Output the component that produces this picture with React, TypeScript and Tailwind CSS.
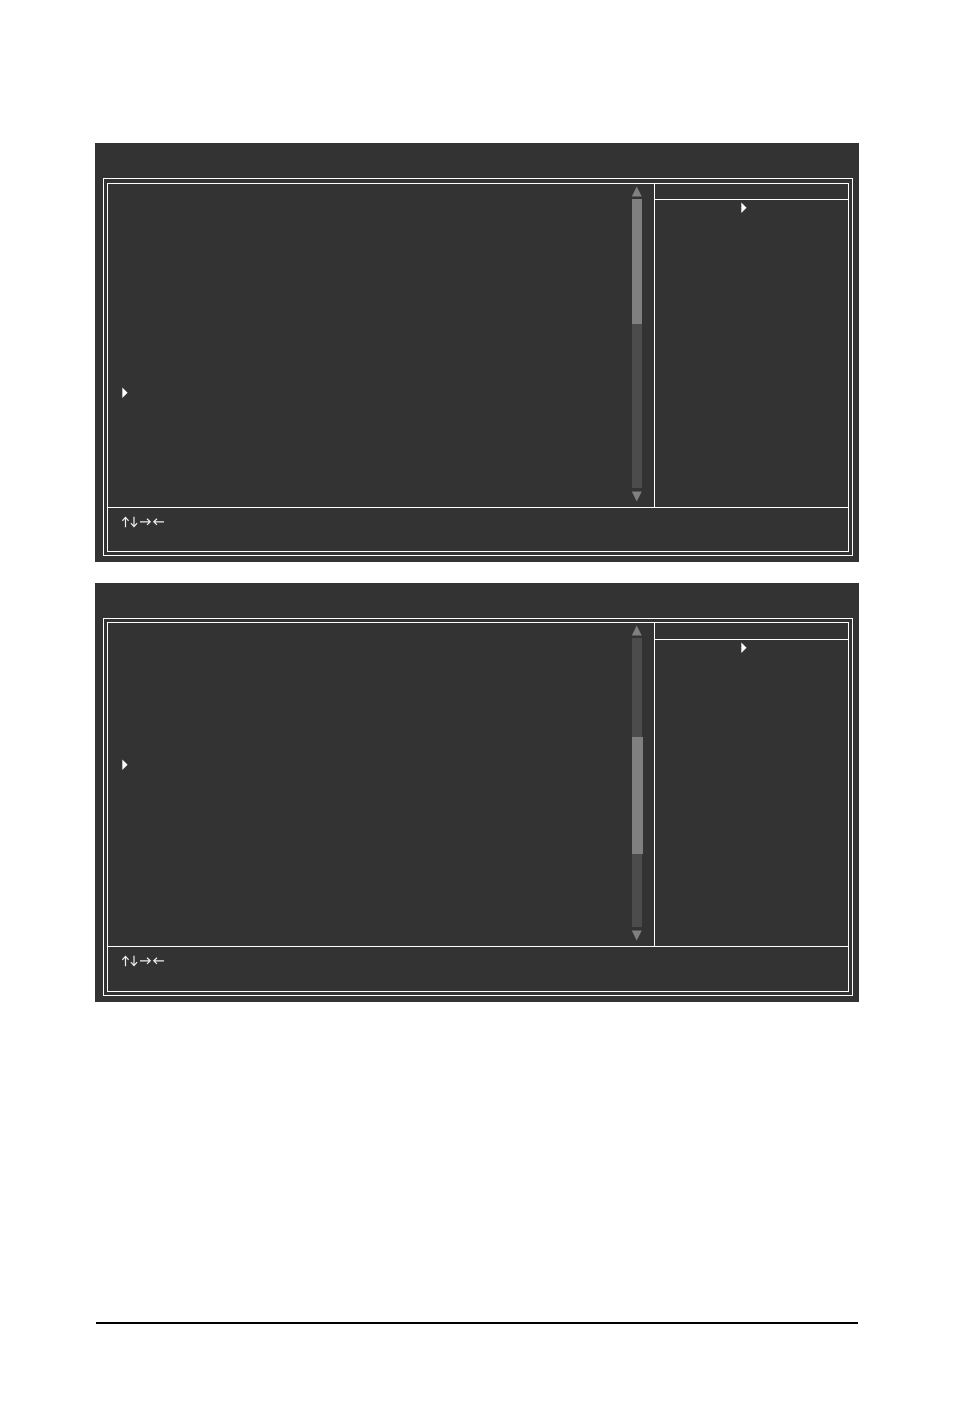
interface ScreenProps {
  frameClass: string
  helpHeadClass: string
  pointerClass: string
  thumbClass: string
  thumbTop: number
  thumbHeight: number
}

function Pointer() {
  return (
    <svg className="block h-[11px] w-[6px]" viewBox="0 0 6 11" fill="#fff">
      <path d="M.3 .4L5.6 5.7L.3 11Z" />
    </svg>
  )
}

function ArrowKeys() {
  return (
    <svg
      className="block h-[12px] w-[43px]"
      viewBox="0 0 43 12"
      fill="none"
      stroke="#eee"
      strokeWidth="1.2"
    >
      {/* up */}
      <path d="M3.5 11.2V1.4M.4 4.8L3.5 1.4L6.6 4.8" />
      {/* down */}
      <path d="M12 .8V10.4M8.9 7.2L12 10.6L15.1 7.2" />
      {/* right */}
      <path d="M18 5.8H28M25 2.7L28.2 5.8L25 8.9" />
      {/* left */}
      <path d="M42 5.8H32M35 2.7L31.8 5.8L35 8.9" />
    </svg>
  )
}

function ScrollBar({ thumbClass, thumbTop, thumbHeight }: Pick<ScreenProps, 'thumbClass' | 'thumbTop' | 'thumbHeight'>) {
  return (
    <div className="mr-3 flex w-[10px] flex-col pt-[2px] pb-[5px]">
      <button type="button" aria-label="Scroll up" className="block">
        <svg className="block h-[11px] w-[10px]" viewBox="0 0 10 11" fill="#808080">
          <path d="M4.7 .6L9.8 10.4H-.2Z" />
        </svg>
      </button>
      <div className="mt-[2px] mb-[3px] flex-1 bg-[#4c4c4c]">
        <div
          className={`relative bg-[#808080] ${thumbClass}`}
          style={{ top: thumbTop, height: thumbHeight }}
        />
      </div>
      <button type="button" aria-label="Scroll down" className="block">
        <svg className="block h-[11px] w-[10px]" viewBox="0 0 10 11" fill="#808080">
          <path d="M-.2 .5H9.8L4.7 10.4Z" />
        </svg>
      </button>
    </div>
  )
}

function SetupScreen({ frameClass, helpHeadClass, pointerClass, ...bar }: ScreenProps) {
  return (
    <section className="bg-[#333] pt-[35px] pr-[6px] pb-[6px] pl-2">
      {/* double frame */}
      <div className={`flex min-h-[378px] flex-col border border-white px-[3px] pb-[3px] ${frameClass}`}>
        <div className="flex flex-1 flex-col border border-white">
          <div className="flex h-[323px]">
            <div className={`flex-1 pl-[14px] ${pointerClass}`}>
              <Pointer />
            </div>
            <ScrollBar {...bar} />
            <aside className="w-[194px] border-l border-white">
              <div className={`border-b border-white ${helpHeadClass}`} />
              <div className="pt-[2px] pl-[86px]">
                <Pointer />
              </div>
            </aside>
          </div>
          <div className="flex-1 border-t border-white pt-2 pl-[14px]">
            <ArrowKeys />
          </div>
        </div>
      </div>
    </section>
  )
}

export default function App() {
  return (
    <div className="flex min-h-screen flex-col bg-white px-[95px] pt-[143px] pb-[94px]">
      <main className="flex flex-col gap-[21px]">
        <SetupScreen
          frameClass="pt-[4px]"
          helpHeadClass="h-[16px]"
          pointerClass="pt-[203px]"
          thumbClass="w-[10px]"
          thumbTop={0}
          thumbHeight={125}
        />
        <SetupScreen
          frameClass="pt-[3px]"
          helpHeadClass="h-[17px]"
          pointerClass="pt-[136px]"
          thumbClass="w-[11px]"
          thumbTop={99}
          thumbHeight={117}
        />
      </main>
      <hr className="mx-px mt-auto border-t-2 border-black" />
    </div>
  )
}
